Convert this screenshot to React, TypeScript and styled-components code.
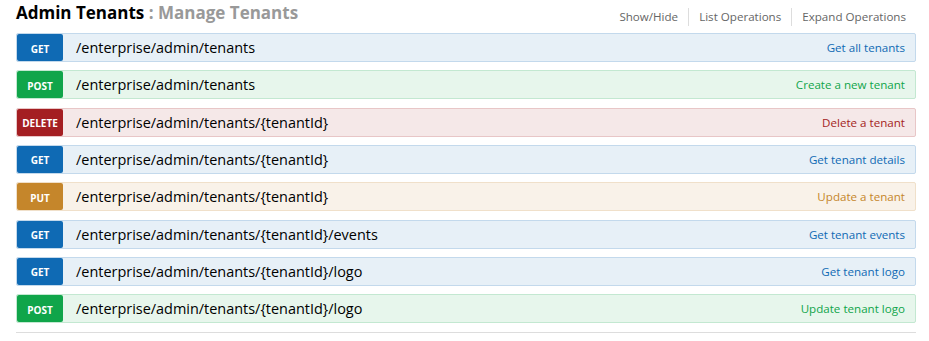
import React from 'react';
import styled, {createGlobalStyle} from 'styled-components';

type Method = 'get' | 'post' | 'delete' | 'put';

interface Operation {
  method: Method;
  path: string;
  summary: string;
}

const palette: Record<Method, {badge: string; bg: string; border: string; text: string}> = {
  get: {badge: '#0f6ab4', bg: '#e7f0f7', border: '#c3d9ec', text: '#0f6ab4'},
  post: {badge: '#10a54a', bg: '#e7f6ec', border: '#c3e8d1', text: '#10a54a'},
  delete: {badge: '#a41e22', bg: '#f5e8e8', border: '#e8c6c7', text: '#a41e22'},
  put: {badge: '#c5862b', bg: '#f9f2e9', border: '#f0e0ca', text: '#c5862b'},
};

const operations: Operation[] = [
  {method: 'get', path: '/enterprise/admin/tenants', summary: 'Get all tenants'},
  {method: 'post', path: '/enterprise/admin/tenants', summary: 'Create a new tenant'},
  {method: 'delete', path: '/enterprise/admin/tenants/{tenantId}', summary: 'Delete a tenant'},
  {method: 'get', path: '/enterprise/admin/tenants/{tenantId}', summary: 'Get tenant details'},
  {method: 'put', path: '/enterprise/admin/tenants/{tenantId}', summary: 'Update a tenant'},
  {method: 'get', path: '/enterprise/admin/tenants/{tenantId}/events', summary: 'Get tenant events'},
  {method: 'get', path: '/enterprise/admin/tenants/{tenantId}/logo', summary: 'Get tenant logo'},
  {method: 'post', path: '/enterprise/admin/tenants/{tenantId}/logo', summary: 'Update tenant logo'},
];

const GlobalStyle = createGlobalStyle`
  body {
    margin: 0;
    background: #fff;
    font-family: "Open Sans", "Noto Sans", sans-serif;
  }
`;

export default function App() {
  return (
    <>
      <GlobalStyle/>
      <Resource>
        <Heading>
          <Title>
            Admin Tenants <Subtitle>: Manage Tenants</Subtitle>
          </Title>
          <Options>
            <Option>Show/Hide</Option>
            <Option>List Operations</Option>
            <Option>Expand Operations</Option>
          </Options>
        </Heading>
        <OperationList>
          {operations.map((op, i) => (
            <OperationRow key={i} method={op.method}>
              <Badge method={op.method}>{op.method.toUpperCase()}</Badge>
              <Path>{op.path}</Path>
              <Summary method={op.method}>{op.summary}</Summary>
            </OperationRow>
          ))}
        </OperationList>
      </Resource>
    </>
  );
}

const Resource = styled.div`
  width: 900px;
  margin-left: 16px;
  padding-bottom: 9px;
  border-bottom: 1px solid #ddd;
`;

const Heading = styled.div`
  display: flex;
  justify-content: space-between;
  align-items: flex-start;
  height: 33px;
`;

const Title = styled.h2`
  margin: 0;
  padding-top: 1px;
  font-size: 17px;
  line-height: 24px;
  font-weight: 700;
  color: #000;
`;

const Subtitle = styled.span`
  color: #999;
`;

const Options = styled.ul`
  display: flex;
  margin: 0;
  padding: 8px 0 0;
  list-style: none;
`;

const Option = styled.li`
  padding: 1px 10px;
  font-size: 11.6px;
  line-height: 16px;
  color: #666;
  border-right: 1px solid #ddd;

  &:last-child {
    border-right: none;
  }
`;

const OperationList = styled.div`
  display: flex;
  flex-direction: column;
  gap: 8.33px;
`;

const OperationRow = styled.div<{method: Method}>`
  display: flex;
  align-items: stretch;
  height: 27px;
  background: ${p => palette[p.method].bg};
  border: 1px solid ${p => palette[p.method].border};
  border-radius: 2px;
`;

const Badge = styled.span<{method: Method}>`
  display: flex;
  align-items: center;
  justify-content: center;
  width: 46px;
  padding-top: 2px;
  box-sizing: border-box;
  background: ${p => palette[p.method].badge};
  color: #fff;
  font-size: 10px;
  font-weight: 700;
  border-radius: 2px;
`;

const Path = styled.span`
  flex: 1;
  padding-left: 13px;
  font-size: 14.45px;
  line-height: 27px;
  color: #000;
`;

const Summary = styled.span<{method: Method}>`
  padding-right: 10px;
  font-size: 11.6px;
  line-height: 27px;
  color: ${p => palette[p.method].text};
`;
